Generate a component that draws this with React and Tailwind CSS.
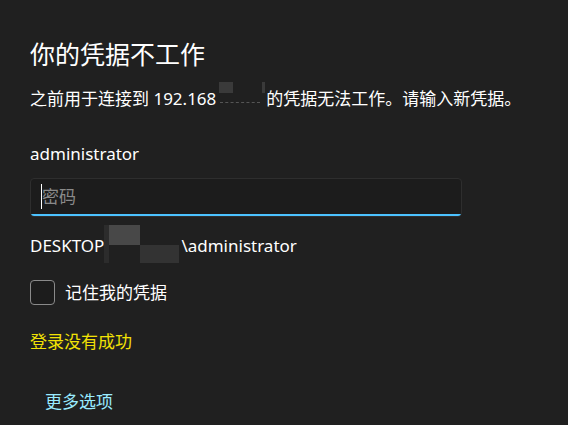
export default function App() {
  const font = { fontFamily: '"Noto Sans", "Noto Sans CJK SC", sans-serif' };
  return (
    <div className="w-[568px] h-[425px] bg-[#202020] text-white overflow-hidden" style={font}>
      <div className="pl-[30px] pt-[38px] flex flex-col items-start">
        <h1 className="text-[25px] leading-[32px] font-normal">你的凭据不工作</h1>
        <p className="mt-[17px] text-[17px] leading-[24px] whitespace-nowrap flex items-center">
          <span>之前用于连接到 192.168</span>
          <span className="relative inline-block w-[50px] h-[24px]">
            <span className="absolute left-[3px] top-[-5px] w-[14px] h-[11px] bg-[#3a3a3a]"></span>
            <span className="absolute left-[4px] top-[15px] w-[40px] border-b border-dashed border-[#555]"></span>
            <span className="absolute left-[46px] top-[-5px] w-[3px] h-[11px] bg-[#3a3a3a]"></span>
          </span>
          <span>的凭据无法工作。请输入新凭据。</span>
        </p>
        <div className="mt-[31px] text-[17px] leading-[24px]">administrator</div>
        <div className="mt-[12px] w-[432px] h-[39px] rounded-[4px] border border-[#2e2e2e] bg-[#1c1c1c] overflow-hidden flex flex-col">
          <div className="flex-1 flex items-center pl-[10px]">
            <span className="w-px h-[25px] bg-white"></span>
            <span className="text-[17px] leading-[24px] text-[#8a8a8a]">密码</span>
          </div>
          <div className="h-[2px] bg-[#4cc2ff]"></div>
        </div>
        <div className="mt-[17px] text-[17px] leading-[24px] whitespace-nowrap flex">
          <span>DESKTOP</span>
          <span className="relative inline-block w-[77px] h-[24px]">
            <span className="absolute left-0 top-[-9px] w-[5px] h-[38px] bg-[#2c2c2c]"></span>
            <span className="absolute left-[5px] top-[-9px] w-[31px] h-[20px] bg-[#484848]"></span>
            <span className="absolute left-[36px] top-[11px] w-[39px] h-[18px] bg-[#333333]"></span>
          </span>
          <span>\administrator</span>
        </div>
        <label className="mt-[22px] flex items-center gap-[10px]">
          <span className="w-[25px] h-[25px] rounded-[4px] border border-[#8a8a8a] bg-[#1c1c1c]"></span>
          <span className="text-[17px] leading-[24px]">记住我的凭据</span>
        </label>
        <div className="mt-[25px] text-[17px] leading-[24px] text-[#f2e205]">登录没有成功</div>
        <button className="mt-[36px] ml-[15px] text-[17px] leading-[24px] text-[#99ebff]">更多选项</button>
      </div>
    </div>
  );
}
